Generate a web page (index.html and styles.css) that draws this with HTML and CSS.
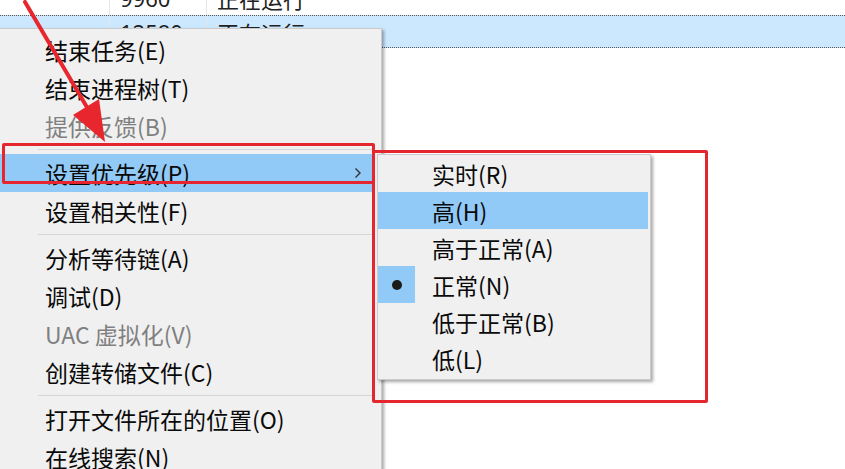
FILE: index.html
```html
<!DOCTYPE html>
<html lang="zh-CN">
<head>
<meta charset="utf-8">
<title>任务管理器 - 设置优先级</title>
<link rel="stylesheet" href="styles.css">
</head>
<body>
<div class="page">
  <div class="grid">
    <div class="row">
      <span class="cell c0"></span>
      <span class="cell c1">9960</span>
      <span class="cell c2">正在运行</span>
    </div>
    <div class="row sel">
      <span class="cell c0"></span>
      <span class="cell c1">12580</span>
      <span class="cell c2">正在运行</span>
    </div>
    <div class="row"></div>
  </div>

  <div class="menu">
    <div class="item">结束任务(E)</div>
    <div class="item">结束进程树(T)</div>
    <div class="item disabled">提供反馈(B)</div>
    <div class="sep"></div>
    <div class="item hot has-sub">
      <span>设置优先级(P)</span>
      <svg class="chev" width="8" height="12" viewBox="0 0 8 12"><polyline points="1.5,1.5 6,6 1.5,10.5" fill="none" stroke="#333" stroke-width="1.4"/></svg>
    </div>
    <div class="item">设置相关性(F)</div>
    <div class="sep"></div>
    <div class="item">分析等待链(A)</div>
    <div class="item">调试(D)</div>
    <div class="item disabled">UAC 虚拟化(V)</div>
    <div class="item">创建转储文件(C)</div>
    <div class="sep"></div>
    <div class="item">打开文件所在的位置(O)</div>
    <div class="item">在线搜索(N)</div>
  </div>

  <div class="submenu">
    <div class="item">实时(R)</div>
    <div class="item hot">高(H)</div>
    <div class="item">高于正常(A)</div>
    <div class="item checked"><span class="mark"><span class="dot"></span></span>正常(N)</div>
    <div class="item">低于正常(B)</div>
    <div class="item">低(L)</div>
  </div>

  <div class="mark-box box1"></div>
  <div class="mark-box box2"></div>

  <svg class="arrow" width="845" height="469" viewBox="0 0 845 469">
    <line x1="25" y1="2" x2="88" y2="109" stroke="#e8262d" stroke-width="4" stroke-linecap="round"/>
    <polygon points="105,142 73,115 99,99" fill="#e8262d"/>
  </svg>
</div>
</body>
</html>
```

FILE: styles.css
```css
html, body {
  margin: 0;
  padding: 0;
  background: #ffffff;
}

.page {
  position: relative;
  width: 845px;
  height: 469px;
  overflow: hidden;
  font-family: "Noto Sans CJK SC", "Noto Sans", sans-serif;
  color: #111;
}

/* background list */
.grid {
  margin-top: -20px;
}

.row {
  display: flex;
  height: 35px;
  align-items: center;
}

.row.sel {
  background: #cce8ff;
  border-top: 1px dotted #555;
  border-bottom: 1px dotted #555;
  height: 31px;
}

.cell {
  height: 100%;
  display: flex;
  align-items: center;
  font-size: 22px;
  color: #222;
  box-sizing: border-box;
}

.c0 {
  width: 110px;
  border-right: 1px solid #e6e6e6;
}

.c1 {
  width: 97px;
  padding-left: 10px;
  border-right: 1px solid #e6e6e6;
  font-family: "Noto Sans", sans-serif;
}

.c2 {
  padding-left: 10px;
}

/* context menu */
.menu {
  position: absolute;
  left: -10px;
  top: 28px;
  width: 392px;
  height: 460px;
  box-sizing: border-box;
  background: #f0f0f0;
  border: 1px solid #cccccc;
  box-shadow: 2px 2px 3px rgba(0, 0, 0, 0.35);
  padding: 2px 7px 2px 0;
}

.item {
  height: 38px;
  display: flex;
  align-items: center;
  padding-left: 54px;
  font-size: 23px;
  color: #0a0a0a;
  white-space: nowrap;
}

.item.disabled {
  color: #808080;
}

.item.hot {
  background: #91c9f7;
}

.has-sub {
  justify-content: space-between;
  padding-right: 12px;
}

.chev {
  display: block;
}

.sep {
  height: 9px;
  margin-left: 47px;
  position: relative;
}

.sep::after {
  content: "";
  position: absolute;
  left: 0;
  right: 0;
  top: 4px;
  border-top: 1px solid #d5d5d5;
}

/* priority submenu */
.submenu {
  position: absolute;
  left: 377px;
  top: 154px;
  width: 274px;
  box-sizing: border-box;
  background: #f0f0f0;
  border: 1px solid #cccccc;
  box-shadow: 2px 2px 3px rgba(0, 0, 0, 0.35);
  padding: 0 2px 2px 0;
}

.submenu .item {
  height: 37px;
}

.submenu .item.checked {
  padding-left: 0;
}

.mark {
  width: 37px;
  height: 37px;
  margin-right: 17px;
  background: #91c9f7;
  display: flex;
  align-items: center;
  justify-content: center;
}

.dot {
  width: 10px;
  height: 10px;
  border-radius: 50%;
  background: #1a1a1a;
}

/* annotations */
.mark-box {
  position: absolute;
  border: 3px solid #e5262e;
  border-radius: 2px;
  box-sizing: border-box;
}

.box1 {
  left: 2px;
  top: 143px;
  width: 373px;
  height: 41px;
}

.box2 {
  left: 372px;
  top: 150px;
  width: 336px;
  height: 253px;
}

.arrow {
  position: absolute;
  left: 0;
  top: 0;
  pointer-events: none;
}
```
